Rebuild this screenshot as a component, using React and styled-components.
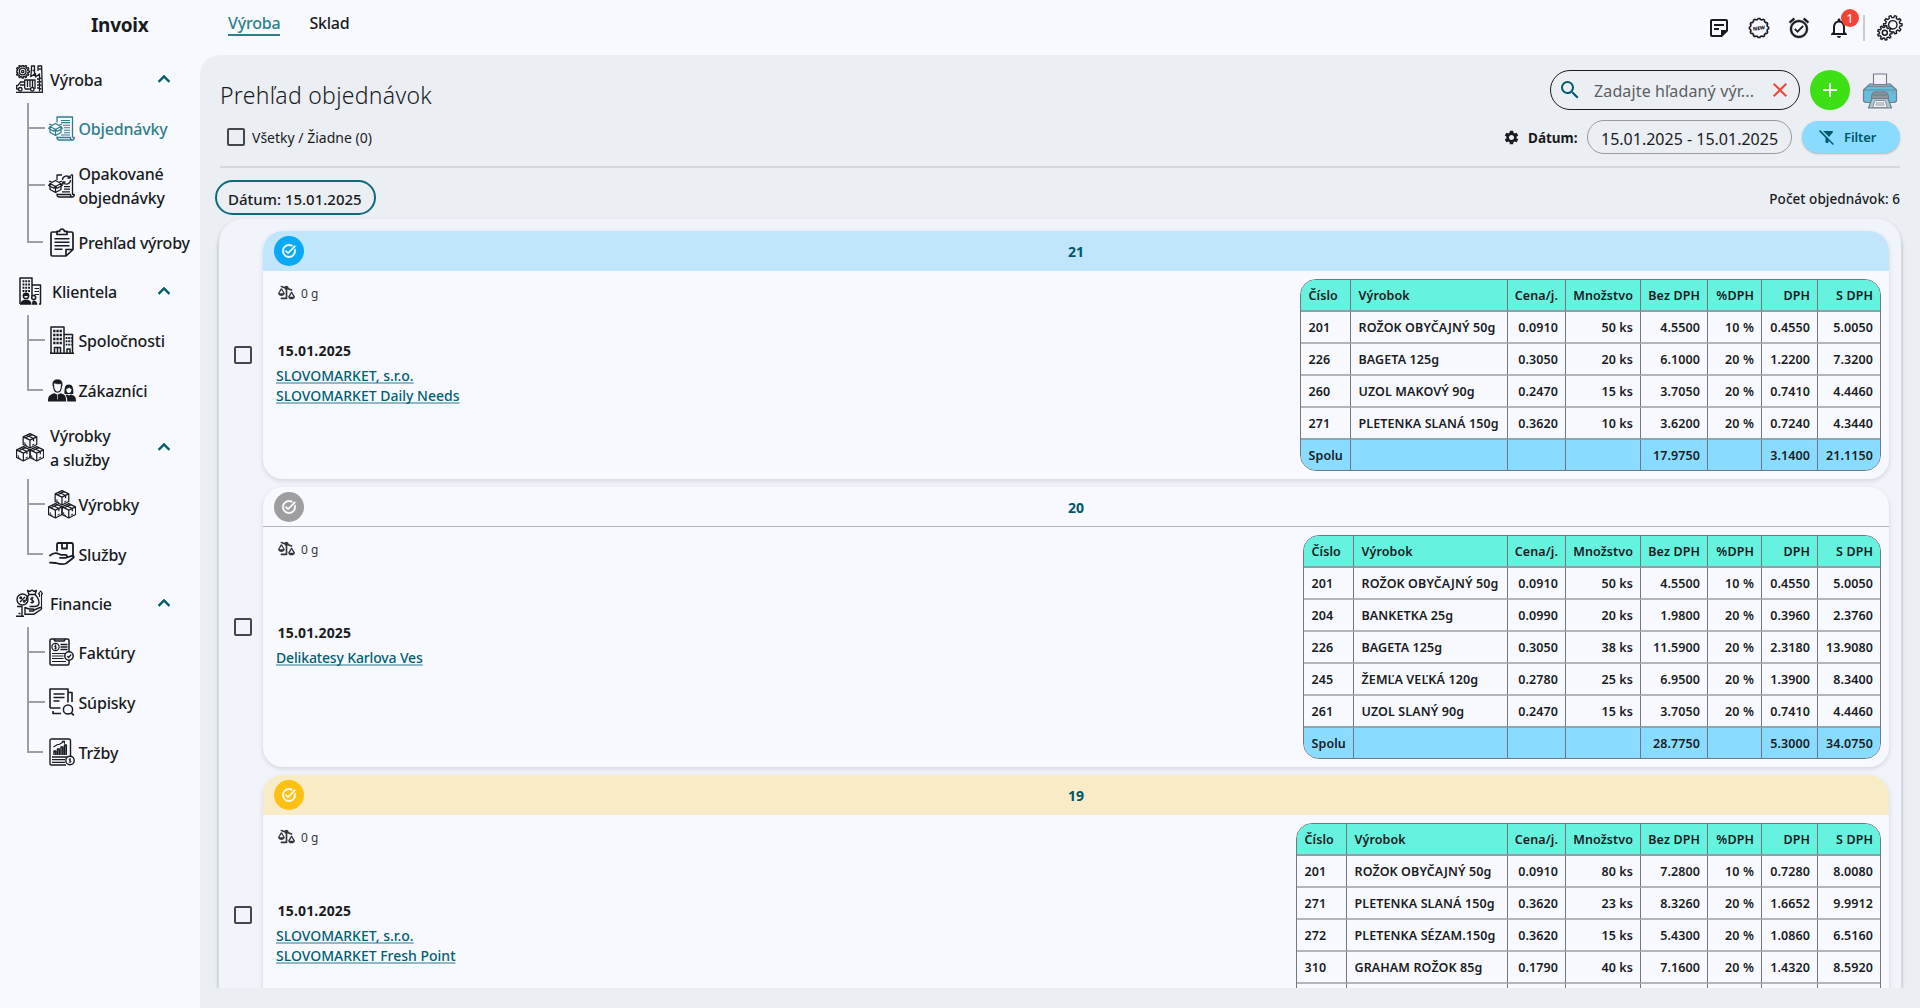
import styled, { createGlobalStyle, css } from "styled-components";
import {
  MdAdd,
  MdAlarmOn,
  MdClose,
  MdExpandLess,
  MdFilterAltOff,
  MdNotificationsNone,
  MdOutlineStickyNote2,
  MdSearch,
  MdSettings,
  MdTaskAlt,
} from "react-icons/md";
import { FaScaleUnbalancedFlip } from "react-icons/fa6";

const GlobalStyle = createGlobalStyle`
  *{
    box-sizing: border-box;
  }
  body{
    margin: 0;
    background: #f8f9ff;
    color: #191c1e;
    font-family: "Noto Sans", "Open Sans", sans-serif;
    font-size: 16px;
    overflow: hidden;
  }
  svg{
    display: block;
    flex-shrink: 0;
  }
  p{
    margin: 0;
  }
`;

/* ---------- icons ---------- */

const cog = (cx, cy, inner, outer, teeth) => {
  const pts = [];
  const step = (Math.PI * 2) / teeth;
  for (let i = 0; i < teeth; i++) {
    const a = i * step;
    [[-0.3, inner], [-0.17, outer], [0.17, outer], [0.3, inner]].forEach(([k, r]) => {
      pts.push(`${(cx + Math.cos(a + k * step) * r).toFixed(2)},${(cy + Math.sin(a + k * step) * r).toFixed(2)}`);
    });
  }
  return `M${pts.join("L")}Z`;
};

const Draw = ({ w = 28, h = 28, sw = 1.3, children }) => (
  <svg width={w} height={h} viewBox={`0 0 ${w} ${h}`} fill="none" stroke="currentColor" strokeWidth={sw} strokeLinejoin="round">
    {children}
  </svg>
);

const FactoryIcon = () => (
  <Draw w={27} h={28} sw={1.3}>
    <path d={cog(6.7, 6.5, 5.2, 6.7, 12)} />
    <circle cx="6.7" cy="6.5" r="3.3" />
    <circle cx="6.7" cy="6.5" r="1.2" />
    <path d="M15.5 3V1h3v10M22 6V1h3.6l.8 26M15.5 3l-.6 9M14 12l5.5-3.5V12l4-3v17.5" />
    <path d="M21 14h2M21 17h2M21 20h2M21 23h2M24.5 12.5v1.5M24.5 16v1.5M24.5 19.5V21M24.5 23v1.5M16.5 5.5h2M22.5 4h3" strokeWidth="1.7" />
    <path d="M8.7 24h5.2M8.7 23.5V15h10.3v9M11.5 15.5V22M14 15.5V22M16.5 15.5V22M8.5 17h-4L2 20.3H.7V24H2M4 20h4.5" />
    <circle cx="4.3" cy="24.3" r="1.8" />
    <circle cx="16.3" cy="24.3" r="1.8" />
    <path d="M0 27.3h27" />
  </Draw>
);

const OpenBox = () => (
  <path d="M2 10.5 7.5 7.5l5.5 3-5.5 3zM2 10.5v6l5.5 3 5.5-3v-6M7.5 13.5v6M2 10.5l-1.3 2 5 2.7 1.8-1.7 1.8 1.7 5-2.7-1.3-2M4 9.3 1 8M11 9.3 14 8" />
);

const OrderIcon = () => (
  <Draw w={27} h={25} sw={1.3}>
    <path d="M9 6.5V1h15.5v20.5M9 20.5v1M24.5 21.5h1.8c0 1.6-.7 2.5-2 2.5H11.5C10 24 9 23 9 21.5h13.5c0 1.5.8 2.5 2 2.5" />
    <path d="M13 4.5h9M13 6.6h9M15 9.2h7M16 11.7h6M16 14.2h6M16 16.7h6M13 19h9" strokeWidth="1.15" />
    <OpenBox />
  </Draw>
);

const RepeatIcon = () => (
  <Draw w={27} h={25} sw={1.3}>
    <path d="M9 7V2h5M23 2h1.5v20M9 20.5v1M24.5 21.5h1.8c0 1.6-.7 2.5-2 2.5H11.5C10 24 9 23 9 21.5h13.5c0 1.5.8 2.5 2 2.5" />
    <path d="M14.5 7a4 4 0 0 1 7.3-2.2M22.5 7a4 4 0 0 1-7.3 2.3M22.2 2.3V5h-2.7M14.8 11.7V9h2.7" />
    <path d="M16 13.7h6M16 16.2h6M14 18.8h8" strokeWidth="1.2" />
    <OpenBox />
  </Draw>
);

const ClipboardIcon = () => (
  <Draw w={24} h={29} sw={1.7}>
    <path d="M7 4H2.5C1.5 4 1 4.5 1 5.5v21c0 1 .5 1.5 1.5 1.5H16l7-6.5v-16C23 4.5 22.5 4 21.5 4H17M16 28v-6.5h7" />
    <path d="M7 6.5V3.3h2.5c.3-1.5 1.2-2.3 2.5-2.3s2.2.8 2.5 2.3H17v3.2z" />
    <path d="M4.5 10.8h15M4.5 14.3h15M4.5 17.8h15M4.5 21.3h8" strokeWidth="1.5" />
  </Draw>
);

const BuildingPeopleIcon = () => (
  <Draw w={23} h={28} sw={1.5}>
    <path d="M1 27V1h12v18M13 8h8.5v19M1 27h1M20 27h2" />
    <path d="M3.5 4.3H11M3.5 7.5H11M3.5 10.7H11M3.5 13.9H11" strokeWidth="2" strokeDasharray="1.9 .9" />
    <path d="M15.5 11.5H20M15.5 14.5H20M15.5 17.5H20" strokeWidth="1.2" />
    <circle cx="7" cy="19" r="2.6" />
    <path d="M4.4 18.5c.5-3 4.8-3 5.2-.2-2 .2-3-.6-5.2.2z" fill="currentColor" />
    <path d="M1.5 27.8c0-4 2.5-5 5.5-5s5.5 1 5.5 5z" fill="currentColor" stroke="none" />
    <circle cx="14.7" cy="20.5" r="2" />
    <path d="M13 27.8c.2-3 .3-4.3 1.7-4.3s3.5 1 3.7 4.3z" fill="currentColor" stroke="none" />
  </Draw>
);

const BuildingsIcon = () => (
  <Draw w={24} h={28} sw={1.5}>
    <path d="M1 27V1h13v26M14 8.5h8.5V27M0 27.2h24M4.5 27v-5.5h6V27M7.5 21.5V27M17 27v-4h3v4" />
    <path d="M3.2 5h9M3.2 9h9M3.2 13h9M3.2 17h9" strokeWidth="2.5" strokeDasharray="2.3 .9" />
    <path d="M15.7 12h6M15.7 15.3h6M15.7 18.6h6" strokeWidth="1.9" strokeDasharray="1.7 .8" />
  </Draw>
);

const PeopleIcon = () => (
  <Draw w={28} h={23} sw={1.2}>
    <path d="M0 22.5c0-5 1-7 6.5-8.3l3 1.6 3-1.6c5 1.2 5.5 3.3 5.7 8.3z" fill="currentColor" stroke="none" />
    <path d="M5.5 6c0 4.5 1.7 7.2 4 7.2s4-2.7 4-7.2" />
    <path d="M5 7C4.2 2.5 6 .7 9.5.7S14.8 2.5 14 7l-1-2.5c-2 .8-5 .3-6.5-.7z" fill="currentColor" strokeWidth=".6" />
    <path d="M9.5 16v4.5" stroke="#f8f9ff" strokeWidth=".6" />
    <path d="M16.5 15c-.3-6.5.5-9.5 4.3-9.5s4.7 3 4.5 9.5z" fill="currentColor" stroke="none" />
    <path d="M18.3 10c1.5-.2 2.5-.8 3-1.7.5 1 1.2 1.5 2.2 1.7 0 2.5-1 4-2.6 4s-2.6-1.5-2.6-4z" fill="#f8f9ff" stroke="none" />
    <path d="M19.3 22.5c0-2.5-.3-4.5-1.8-6.2l1.5-.8 2 1 2-1c4 1 5 2.5 5 7z" fill="currentColor" stroke="none" />
  </Draw>
);

const Cube = ({ x, y }) => (
  <g transform={`translate(${x} ${y}) scale(1.08 1.1)`}>
    <path d="M.7 3.5 7 .6l6.3 2.9v7L7 13.6.7 10.5zM.7 3.5l6.3 3 6.3-3M7 6.5v7.1M4 2l6.3 3v2.5M9 1.3l-6 3" />
    <path d="M2.3 8.5v2l2 1M9 11l2-1" strokeWidth=".9" />
  </g>
);

const BoxesIcon = () => (
  <Draw w={28} h={29} sw={1.15}>
    <Cube x={6.4} y={0} />
    <Cube x={-0.2} y={13} />
    <Cube x={13.2} y={13} />
  </Draw>
);

const HandBoxIcon = () => (
  <Draw w={26} h={24} sw={1.8}>
    <path d="M8 8.5v-6C8 1.5 8.5 1 9.5 1h13c1 0 1.5.5 1.5 1.5v12M13 1v5.5h5V1" strokeLinecap="round" />
    <path d="M1 13.5c3-2.5 6-3 9-1.5l2 .8h4.5c2 0 2 3 0 3H11M16.5 15.8l6-1.8c2.5-.5 3 1.2 1 2.5l-6.5 5c-4 1.5-7 .5-10-.5l-6-.3" strokeLinecap="round" />
  </Draw>
);

const FinanceIcon = () => (
  <Draw w={27} h={28} sw={1.4}>
    <circle cx="6.5" cy="10.5" r="5.5" />
    <path d="m9 8-5 5" />
    <circle cx="4.7" cy="8.8" r=".8" />
    <circle cx="8.3" cy="12.3" r=".8" />
    <path d="m13 5.5-1.5-4 2.5.8L16 1l2 1.3 2.5-.8-1.5 4zM13 5.5c-1.5 2-3 4-3 6.5M19 5.5c3 3 4 6 4 8 0 3-2 4-4.5 4h-5" />
    <path d="M17.6 9.2c-.8-.8-2.9-.6-2.9.8 0 1.6 3 1 3 2.6 0 1.4-2.3 1.5-3.1.5M16.2 7.8v6.8" strokeWidth="1.1" />
    <path d="M23.5 8V5h-1.2l2.4-3 2 3h-1.2v15" strokeWidth="1.1" />
    <path d="M1 17.5h5V27M0 27.3h8M9 18.5l4 1.5h4c1.5 0 1.5 2 0 2h-4M17 21.5l7-3c1.8-.3 2 1.2 1 2l-7 4.7H9M2.5 24.5h2M9 18v8" />
  </Draw>
);

const InvoiceIcon = () => (
  <Draw w={25} h={28} sw={1.5}>
    <path d="M20 14V2.5C20 1.5 19.5 1 18.5 1h-16C1.5 1 1 1.5 1 2.5v23c0 1 .5 1.5 1.5 1.5h16c1 0 1.5-.5 1.5-1.5V22M5 1.5 6 3h9l1-1.5" />
    <circle cx="6.5" cy="9" r="3.6" strokeWidth="1.2" />
    <path d="M6.5 6.5v5M7.5 7.9c-.7-.7-2-.4-2 .4 0 1 2.1.6 2.1 1.6s-1.5 1.1-2.2.4" strokeWidth=".9" />
    <path d="M11.5 6.5h7M11.5 9h7M11.5 11.5h7" strokeWidth="1.6" />
    <path d="M3 15.5h13M3 18h11.5M3 20.5h11.5M3 23.5h14" strokeWidth="1.2" />
    <circle cx="20" cy="18" r="4.2" fill="#f8f9ff" />
    <path d="m18.3 18.2 1.3 1.3 2.6-3" strokeWidth="1.2" />
  </Draw>
);

const DocSearchIcon = () => (
  <Draw w={26} h={28} sw={1.6}>
    <path d="M1 20V1h18v13.5M1 20h10.5M19.5 4.5H23V14M4 23v2.5h8" />
    <path d="M4.5 6h11M4.5 9.5h11M4.5 13h6" strokeWidth="1.4" />
    <circle cx="19" cy="21.5" r="4.6" strokeWidth="1.5" />
    <path d="m22.3 24.8 2.5 2.5" strokeWidth="1.8" />
  </Draw>
);

const SalesIcon = () => (
  <Draw w={26} h={28} sw={1.4}>
    <path d="M21.5 18V2.5C21.5 1.5 21 1 20 1H2.5C1.5 1 1 1.5 1 2.5v23c0 1 .5 1.5 1.5 1.5H17" />
    <path d="M5 17v-4h1.8v4M8.5 17v-6h1.8v6M12 17V9h1.8v8M15.5 17V7h1.8v10" strokeWidth="1.5" />
    <path d="m4.5 9 4-2.5 2-.3L15 3.5M12.8 3.3h2.7v2.4" strokeWidth="1.1" />
    <path d="M3 19h15.5M3 21.7h13M3 24.4h13" strokeWidth="1.3" />
    <circle cx="21" cy="22.5" r="4.2" fill="#f8f9ff" />
    <path d="M21 20v5M22 21.5c-.7-.7-2-.4-2 .3 0 1 2.1.6 2.1 1.5s-1.5 1.1-2.2.4" strokeWidth=".9" />
  </Draw>
);

const NewIcon = () => (
  <svg width="24" height="24" viewBox="0 0 24 24" fill="none" stroke="currentColor" strokeWidth="1.6" strokeLinejoin="round">
    <path d={cog(12, 12, 8.6, 9.6, 12)} />
    <text x="12" y="13.9" textAnchor="middle" fill="currentColor" stroke="none" fontSize="5" fontWeight="900" transform="rotate(-8 12 12)">NEW</text>
  </svg>
);

const GearsIcon = () => (
  <svg width="26" height="26" viewBox="0 0 26 26" fill="none" stroke="currentColor" strokeWidth="1.4" strokeLinejoin="round">
    <path d={cog(15.8, 9.8, 7.2, 9.3, 10)} />
    <circle cx="15.8" cy="9.8" r="4.2" />
    <path d={cog(7.8, 17.8, 5.4, 7.3, 9)} fill="#f8f9ff" />
    <circle cx="7.8" cy="17.8" r="2.5" strokeWidth="1.5" />
  </svg>
);

const PrinterIcon = () => (
  <svg width="36" height="36" viewBox="0 0 36 36" stroke="#737b84" strokeWidth="1.2" strokeLinejoin="round">
    <path d="M8 11h20l6.5 6v11l-2 1.5h-29l-2-1.5V17z" fill="#62bfe0" />
    <path d="M2 17h32M6 13.5h24" fill="none" strokeWidth=".8" />
    <path d="M11.5 11.5V1h13v10.5z" fill="#f2f3f4" strokeWidth="1.1" />
    <path d="M9.5 27c-.5-5 1-8 4-8h9c3 0 4.5 3 4 8z" fill="#8d959d" />
    <path d="M11.5 22h13" fill="none" />
    <path d="M10 25.5h16l3.5 9.5h-23z" fill="#a9c9d8" />
    <path d="M13 27.5h10l2.5 7h-15z" fill="#f2f3f4" strokeWidth=".8" />
    <path d="M14 30h8M13.3 32h9.4" fill="none" strokeWidth=".8" />
    <circle cx="31" cy="19.5" r=".9" fill="#f2f3f4" strokeWidth=".8" />
  </svg>
);

/* ---------- data ---------- */

const menu = [
  {
    title: "Výroba",
    icon: <FactoryIcon />,
    items: [
      { title: "Objednávky", icon: <OrderIcon />, active: true },
      { title: <>Opakované<br />objednávky</>, icon: <RepeatIcon />, tall: true },
      { title: "Prehľad výroby", icon: <ClipboardIcon /> },
    ],
  },
  {
    title: "Klientela",
    icon: <BuildingPeopleIcon />,
    indent: true,
    items: [
      { title: "Spoločnosti", icon: <BuildingsIcon /> },
      { title: "Zákazníci", icon: <PeopleIcon /> },
    ],
  },
  {
    title: <>Výrobky<br />a služby</>,
    icon: <BoxesIcon />,
    tall: true,
    items: [
      { title: "Výrobky", icon: <BoxesIcon /> },
      { title: "Služby", icon: <HandBoxIcon /> },
    ],
  },
  {
    title: "Financie",
    icon: <FinanceIcon />,
    items: [
      { title: "Faktúry", icon: <InvoiceIcon /> },
      { title: "Súpisky", icon: <DocSearchIcon /> },
      { title: "Tržby", icon: <SalesIcon /> },
    ],
  },
];

const columns = ["Číslo", "Výrobok", "Cena/j.", "Množstvo", "Bez DPH", "%DPH", "DPH", "S DPH"];

const orders = [
  {
    id: 21,
    status: "#08aaf7",
    head: "#c1e6fc",
    links: ["SLOVOMARKET, s.r.o.", "SLOVOMARKET Daily Needs"],
    nameWidth: 157,
    rows: [
      ["201", "ROŽOK OBYČAJNÝ 50g", "0.0910", "50 ks", "4.5500", "10 %", "0.4550", "5.0050"],
      ["226", "BAGETA 125g", "0.3050", "20 ks", "6.1000", "20 %", "1.2200", "7.3200"],
      ["260", "UZOL MAKOVÝ 90g", "0.2470", "15 ks", "3.7050", "20 %", "0.7410", "4.4460"],
      ["271", "PLETENKA SLANÁ 150g", "0.3620", "10 ks", "3.6200", "20 %", "0.7240", "4.3440"],
    ],
    total: ["Spolu", "", "", "", "17.9750", "", "3.1400", "21.1150"],
  },
  {
    id: 20,
    status: "#9e9ea1",
    line: true,
    links: ["Delikatesy Karlova Ves"],
    nameWidth: 154,
    rows: [
      ["201", "ROŽOK OBYČAJNÝ 50g", "0.0910", "50 ks", "4.5500", "10 %", "0.4550", "5.0050"],
      ["204", "BANKETKA 25g", "0.0990", "20 ks", "1.9800", "20 %", "0.3960", "2.3760"],
      ["226", "BAGETA 125g", "0.3050", "38 ks", "11.5900", "20 %", "2.3180", "13.9080"],
      ["245", "ŽEMĽA VEĽKÁ 120g", "0.2780", "25 ks", "6.9500", "20 %", "1.3900", "8.3400"],
      ["261", "UZOL SLANÝ 90g", "0.2470", "15 ks", "3.7050", "20 %", "0.7410", "4.4460"],
    ],
    total: ["Spolu", "", "", "", "28.7750", "", "5.3000", "34.0750"],
  },
  {
    id: 19,
    status: "#fec111",
    head: "#f8ebc8",
    links: ["SLOVOMARKET, s.r.o.", "SLOVOMARKET Fresh Point"],
    nameWidth: 161,
    rows: [
      ["201", "ROŽOK OBYČAJNÝ 50g", "0.0910", "80 ks", "7.2800", "10 %", "0.7280", "8.0080"],
      ["271", "PLETENKA SLANÁ 150g", "0.3620", "23 ks", "8.3260", "20 %", "1.6652", "9.9912"],
      ["272", "PLETENKA SÉZAM.150g", "0.3620", "15 ks", "5.4300", "20 %", "1.0860", "6.5160"],
      ["310", "GRAHAM ROŽOK 85g", "0.1790", "40 ks", "7.1600", "20 %", "1.4320", "8.5920"],
      ["", "", "", "", "", "", "", ""],
    ],
    total: ["", "", "", "", "", "", "", ""],
  },
];

/* ---------- components ---------- */

const OrderTable = ({ order }) => (
  <Table $name={order.nameWidth}>
    <colgroup>
      {columns.map((c) => (
        <col key={c} />
      ))}
    </colgroup>
    <thead>
      <tr>
        {columns.map((c) => (
          <th key={c}>{c}</th>
        ))}
      </tr>
    </thead>
    <tbody>
      {order.rows.map((row, i) => (
        <tr key={i}>
          {row.map((cell, j) => (
            <td key={j}>{cell}</td>
          ))}
        </tr>
      ))}
    </tbody>
    <tfoot>
      <tr>
        {order.total.map((cell, j) => (
          <td key={j}>{cell}</td>
        ))}
      </tr>
    </tfoot>
  </Table>
);

const Order = ({ order }) => (
  <OrderRow>
    <Select>
      <Checkbox />
    </Select>
    <Card>
      <CardHead $bg={order.head} $line={order.line}>
        <Status $color={order.status}>
          <MdTaskAlt />
        </Status>
        <span>{order.id}</span>
      </CardHead>
      <CardBody>
        <Info>
          <Weight>
            <FaScaleUnbalancedFlip />
            <p>0 g</p>
          </Weight>
          <Customer>
            <p>15.01.2025</p>
            {order.links.map((l) => (
              <a key={l}>{l}</a>
            ))}
          </Customer>
        </Info>
        <OrderTable order={order} />
      </CardBody>
    </Card>
  </OrderRow>
);

const Sidebar = () => (
  <Side>
    {menu.map((group, i) => (
      <div key={i}>
        <GroupHead $tall={group.tall} $indent={group.indent}>
          <span>{group.icon}</span>
          <p>{group.title}</p>
          <MdExpandLess />
        </GroupHead>
        {group.items.map((item, j) => (
          <Item key={j} $tall={item.tall} $active={item.active}>
            <Branch $last={j === group.items.length - 1} />
            <span>{item.icon}</span>
            <p>{item.title}</p>
          </Item>
        ))}
      </div>
    ))}
  </Side>
);

const App = () => {
  return (
    <Page>
      <GlobalStyle />
      <Header>
        <Brand>Invoix</Brand>
        <Tabs>
          <Tab $active>Výroba</Tab>
          <Tab>Sklad</Tab>
        </Tabs>
        <HeaderIcons>
          <MdOutlineStickyNote2 />
          <NewIcon />
          <Alarm />
          <Bell>
            <MdNotificationsNone />
            <span>1</span>
          </Bell>
          <Split />
          <GearsIcon />
        </HeaderIcons>
      </Header>
      <Sidebar />
      <Main>
        <Toolbar>
          <TopRow>
            <h1>Prehľad objednávok</h1>
            <Search>
              <MdSearch />
              <p>Zadajte hľadaný výr...</p>
              <MdClose />
            </Search>
            <AddButton>
              <MdAdd />
            </AddButton>
            <PrinterIcon />
          </TopRow>
          <FilterRow>
            <Checkbox />
            <AllLabel>Všetky / Žiadne (0)</AllLabel>
            <MdSettings />
            <DateLabel>Dátum:</DateLabel>
            <DateRange>15.01.2025 - 15.01.2025</DateRange>
            <FilterButton>
              <MdFilterAltOff />
              Filter
            </FilterButton>
          </FilterRow>
        </Toolbar>
        <Summary>
          <Chip>Dátum: 15.01.2025</Chip>
          <p>Počet objednávok: 6</p>
        </Summary>
        <Clip>
          <List>
            {orders.map((o) => (
              <Order key={o.id} order={o} />
            ))}
          </List>
        </Clip>
      </Main>
    </Page>
  );
};

export default App;

/* ---------- styles ---------- */

const Page = styled.div`
  display: grid;
  grid-template-columns: 200px 1fr;
  grid-template-rows: 55px 953px;
  height: 1008px;
`;

const Header = styled.header`
  grid-column: 1 / 3;
  display: flex;
`;

const Brand = styled.div`
  width: 200px;
  padding: 11px 0 0 91px;
  font-size: 19px;
  line-height: 28px;
  font-weight: 700;
  letter-spacing: -0.3px;
`;

const Tabs = styled.nav`
  display: flex;
  align-items: flex-start;
  gap: 29px;
  padding: 12px 0 0 28px;
  flex: 1;
`;

const Tab = styled.div`
  height: 24px;
  line-height: 23px;
  font-weight: 500;
  letter-spacing: -0.2px;

  ${({ $active }) =>
    $active &&
    css`
      color: #2f7f8b;
      border-bottom: 2px solid #2f7f8b;
    `}
`;

const HeaderIcons = styled.div`
  display: flex;
  align-items: center;
  gap: 16px;
  padding-right: 17px;
  font-size: 24px;
`;

const Alarm = styled(MdAlarmOn)`
  path:not([fill="none"]){
    stroke: currentColor;
    stroke-width: 0.4;
  }
`;

const Bell = styled.div`
  position: relative;

  span{
    position: absolute;
    top: -7px;
    left: 14px;
    width: 18px;
    height: 18px;
    border-radius: 50%;
    background: #f44336;
    color: #fff;
    font-size: 13px;
    line-height: 18px;
    text-align: center;
  }
`;

const Split = styled.div`
  width: 2px;
  height: 26px;
  margin: 0 -4px 0 -4px;
  background: #c9cbd1;
`;

const Side = styled.aside`
  color: #191c1e;
  font-weight: 500;
  letter-spacing: -0.2px;
  line-height: 24px;
`;

const GroupHead = styled.div`
  display: flex;
  align-items: center;
  height: ${({ $tall }) => ($tall ? 64 : 48)}px;
  padding-left: ${({ $indent }) => ($indent ? 19 : 16)}px;

  > span{
    width: ${({ $indent }) => ($indent ? 33 : 34)}px;
  }
  p{
    width: ${({ $indent }) => ($indent ? 100 : 102)}px;
    padding-top: 2px;
  }
  > svg{
    font-size: 24px;
    color: #005b6e;
  }
  > svg path:not([fill="none"]){
    stroke: currentColor;
    stroke-width: 0.5;
  }
`;

const Item = styled.div`
  display: flex;
  align-items: center;
  height: ${({ $tall }) => ($tall ? 64 : 50)}px;
  padding-left: 26px;
  white-space: nowrap;
  color: ${({ $active }) => ($active ? "#2f7f8b" : "inherit")};

  > span{
    display: flex;
    justify-content: center;
    width: 28px;
    margin: 0 3px;
  }
  p{
    padding-top: 2px;
  }
`;

/* vertical stem on the left, arm in the middle of the row */
const Branch = styled.i`
  align-self: stretch;
  width: 18px;
  margin-left: 0.5px;
  border-left: 2px solid ${({ $last }) => ($last ? "transparent" : "#9e9fa3")};
  background:
    linear-gradient(#9e9fa3, #9e9fa3) 0 50% / 16px 2px no-repeat
    ${({ $last }) => $last && ", linear-gradient(#9e9fa3, #9e9fa3) 0 0 / 2px 26px no-repeat"};
  ${({ $last }) => $last && "background-origin: border-box;"}
`;

const Main = styled.main`
  display: flex;
  flex-direction: column;
  min-height: 0;
  padding: 15px 20px 20px;
  background: #ebeef3;
  border-top-left-radius: 20px;
`;

const Toolbar = styled.div`
  border-bottom: 2px solid #d3d6dc;
  height: 98px;
`;

const TopRow = styled.div`
  display: flex;
  align-items: center;
  height: 40px;

  h1{
    flex: 1;
    margin: 0;
    padding-top: 9px;
    font-size: 23px;
    font-weight: 350;
    letter-spacing: 0.28px;
  }
  > svg{
    margin: 2px 2px 0 12px;
  }
`;

const Search = styled.div`
  display: flex;
  align-items: center;
  width: 250px;
  height: 40px;
  padding: 0 7px 0 7px;
  border: 1px solid #191c1e;
  border-radius: 20px;
  font-size: 24px;
  color: #005b6e;

  p{
    flex: 1;
    padding: 2px 0 0 12px;
    font-size: 16px;
    letter-spacing: 0.13px;
    white-space: nowrap;
    color: #5b5f63;
  }
  svg:last-child{
    color: #f44336;
  }
`;

const AddButton = styled.div`
  display: flex;
  align-items: center;
  justify-content: center;
  width: 40px;
  height: 40px;
  margin-left: 10px;
  border-radius: 50%;
  background: #3ddf15;
  color: #fff;
  font-size: 24px;
`;

const FilterRow = styled.div`
  display: flex;
  align-items: center;
  height: 34px;
  margin-top: 10px;
  padding-left: 7px;

  > svg{
    font-size: 17px;
  }
`;

const Checkbox = styled.div`
  width: 18px;
  height: 18px;
  border: 2px solid #43474a;
  border-radius: 2px;
`;

const AllLabel = styled.label`
  flex: 1;
  padding: 1px 0 0 7px;
  font-size: 14px;
`;

const DateLabel = styled.b`
  width: 59px;
  padding-top: 2px;
  margin-left: 8px;
  font-size: 13.5px;
  font-weight: 700;
`;

const DateRange = styled.div`
  width: 205px;
  height: 34px;
  padding-left: 13px;
  border: 1px solid #989a9f;
  border-radius: 17px;
  line-height: 36px;
  white-space: nowrap;
`;

const FilterButton = styled.div`
  display: flex;
  align-items: center;
  width: 98px;
  height: 32px;
  margin-left: 10px;
  padding-left: 16px;
  gap: 8px;
  border-radius: 16px;
  background: #89dcff;
  box-shadow: 0 1px 2px rgba(0, 0, 0, 0.25);
  color: #005668;
  font-size: 13px;
  font-weight: 600;
  letter-spacing: -0.1px;

  svg{
    font-size: 18px;
  }
`;

const Summary = styled.div`
  display: flex;
  align-items: center;
  justify-content: space-between;
  height: 35px;
  margin: 12px 0 2px -5px;
  flex-shrink: 0;

  p{
    padding-top: 3px;
    font-size: 13.5px;
    font-weight: 500;
    letter-spacing: 0.04px;
  }
`;

const Chip = styled.div`
  width: 161px;
  height: 35px;
  padding: 2px 0 0 11px;
  border: 2px solid #0f6a7c;
  border-radius: 18px;
  font-size: 15px;
  font-weight: 500;
  line-height: 31px;
  white-space: nowrap;
`;

const Clip = styled.div`
  flex: 1;
  min-height: 0;
  margin: 0 -7px;
  padding: 2px 6px 0;
  overflow: hidden;
`;

const List = styled.div`
  display: flex;
  flex-direction: column;
  gap: 8px;
  padding: 12px 12px 12px 0;
  border-radius: 24px;
  background: #f1f4fa;
  box-shadow: 0 6px 1px 1.5px #d3d7dc, 0 3px 3px 3px rgba(0, 0, 0, 0.05);
`;

const OrderRow = styled.div`
  display: flex;
`;

const Select = styled.div`
  display: flex;
  align-items: center;
  width: 44px;
  padding-left: 15px;
`;

const Card = styled.div`
  flex: 1;
  border-radius: 20px;
  overflow: hidden;
  background: #f8f9ff;
  box-shadow: 0 2px 5px rgba(0, 0, 0, 0.12);
`;

const CardHead = styled.div`
  display: grid;
  grid-template-columns: 1fr auto 1fr;
  align-items: center;
  height: 40px;
  padding: 0 11px;
  background: ${({ $bg }) => $bg || "transparent"};
  border-bottom: ${({ $line }) => ($line ? "1px solid #b4b6bb" : "none")};
  color: #00566a;
  font-size: 14px;
  font-weight: 700;

  span{
    padding-top: 1px;
  }
`;

const Status = styled.div`
  display: flex;
  align-items: center;
  justify-content: center;
  width: 30px;
  height: 30px;
  border-radius: 50%;
  background: ${({ $color }) => $color};
  color: #fff;
  font-size: 16px;

  path:not([fill="none"]){
    stroke: currentColor;
    stroke-width: 0.7;
  }
`;

const CardBody = styled.div`
  display: flex;
  justify-content: space-between;
  padding: 8px;
`;

const Info = styled.div`
  display: grid;
  grid-template-rows: 1fr auto 1fr;
`;

const Weight = styled.div`
  display: flex;
  gap: 6px;
  padding: 5px 0 0 7px;
  height: 0;
  font-size: 17px;
  color: #33373a;

  p{
    padding-top: 1px;
    font-size: 12px;
    line-height: 18px;
  }
`;

const Customer = styled.div`
  display: flex;
  flex-direction: column;
  align-items: flex-start;
  padding: 0 0 3px 5px;
  font-size: 14px;
  line-height: 20px;

  p{
    margin: 0 0 5px 1.5px;
    font-weight: 700;
    letter-spacing: 0.18px;
  }
  a{
    color: #005f73;
    font-weight: 500;
    text-decoration: underline 2px #8fb8c8;
    text-decoration-skip-ink: none;
    text-underline-offset: 1px;
  }
  a:only-of-type{
    letter-spacing: -0.15px;
  }
`;

const Table = styled.table`
  table-layout: fixed;
  width: ${({ $name }) => $name + 424}px;
  border: 1px solid #74777b;
  border-radius: 16px;
  border-spacing: 0;
  overflow: hidden;
  font-size: 12.5px;
  line-height: 20px;
  font-weight: 600;
  letter-spacing: 0.1px;
  white-space: nowrap;

  col:nth-child(1){ width: 50px; }
  col:nth-child(2){ width: ${({ $name }) => $name}px; }
  col:nth-child(3){ width: 58px; }
  col:nth-child(4){ width: 75px; }
  col:nth-child(5){ width: 67px; }
  col:nth-child(6){ width: 54px; }
  col:nth-child(7){ width: 56px; }
  col:nth-child(8){ width: 62px; }

  th, td{
    height: 32px;
    padding: 1px 7px 0 1px;
    border-right: 1px solid #74777b;
    border-bottom: 2px solid #b2b5b9;
    font-weight: 600;
    text-align: right;
  }
  th{
    background: #65f2df;
    border-bottom-color: #7fa9a8;
  }
  th:nth-child(-n+2), td:nth-child(-n+2){
    padding: 1px 1px 0 7.5px;
    text-align: left;
  }
  th:last-child, td:last-child{
    border-right: none;
  }
  tbody tr:last-child td{
    border-bottom-color: #8ea6ad;
  }
  tfoot td{
    height: 30px;
    background: #89dcff;
    border-bottom: none;
  }
`;
